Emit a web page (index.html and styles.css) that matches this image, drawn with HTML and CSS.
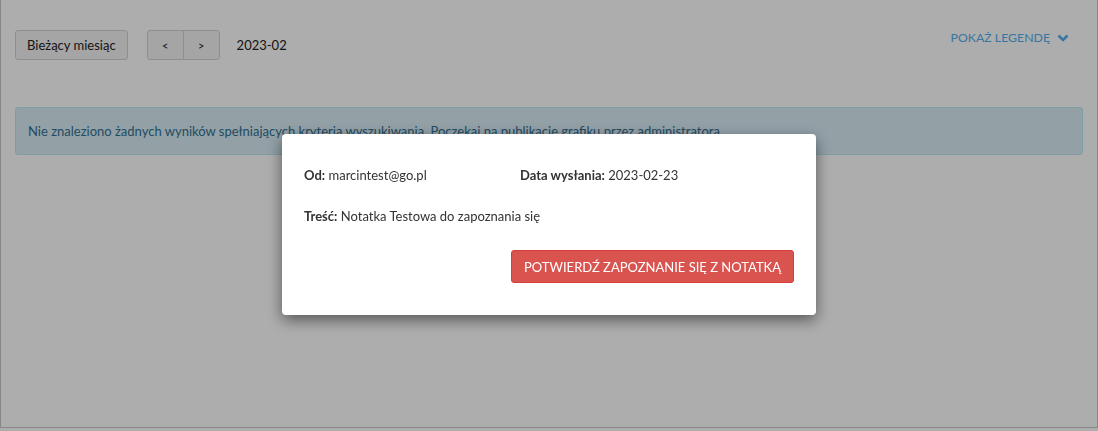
FILE: index.html
```html
<!DOCTYPE html>
<html lang="pl">
<head>
    <meta charset="UTF-8">
    <meta name="viewport" content="width=device-width, initial-scale=1.0">
    <title>Grafik</title>
    <link rel="stylesheet" href="styles.css">
</head>
<body>
    <div class="page">
        <div class="toolbar">
            <button class="btn">Bieżący miesiąc</button>
            <div class="btn-group">
                <button class="btn btn-sm">&lt;</button>
                <button class="btn btn-sm">&gt;</button>
            </div>
            <span class="period">2023-02</span>
            <a class="legend-toggle" href="#">
                Pokaż legendę
                <svg width="12" height="8" viewBox="0 0 12 8"><path d="M1.5 1.5 L6 6 L10.5 1.5" fill="none" stroke="currentColor" stroke-width="2.6"/></svg>
            </a>
        </div>

        <div class="alert">
            Nie znaleziono żadnych wyników spełniających kryteria wyszukiwania. Poczekaj na publikacje grafiku przez administratora.
        </div>
    </div>

    <div class="backdrop"></div>

    <div class="modal">
        <div class="note-row">
            <div><b>Od:</b> marcintest@go.pl</div>
            <div><b>Data wysłania:</b> 2023-02-23</div>
        </div>
        <div class="note-text"><b>Treść:</b> Notatka Testowa do zapoznania się</div>
        <div class="modal-footer">
            <button class="btn-danger">Potwierdź zapoznanie się z notatką</button>
        </div>
    </div>
</body>
</html>
```

FILE: styles.css
```css
body {
    margin: 0;
    font-family: Lato, "Open Sans", sans-serif;
    font-size: 13px;
    color: #333;
    background: #fff;
}
.page {
    height: 427px;
    border: 1px solid #c8c8c8;
    border-top: none;
    box-shadow: 0 2px 3px rgba(0, 0, 0, 0.35);
    padding: 0 14px;
}
.toolbar {
    display: flex;
    align-items: center;
    padding-top: 30px;
    height: 30px;
}
.btn {
    height: 30px;
    padding: 0 11px;
    font-family: inherit;
    font-size: 13px;
    color: #222;
    background: #f3f3f3;
    border: 1px solid #d2d2d2;
    border-radius: 3px;
}
.btn-group {
    display: flex;
    margin-left: 19px;
}
.btn-sm {
    width: 37px;
    padding: 0;
    font-size: 11px;
}
.btn-group .btn-sm:first-child {
    border-radius: 3px 0 0 3px;
}
.btn-group .btn-sm:last-child {
    border-radius: 0 3px 3px 0;
    margin-left: -1px;
}
.period {
    margin-left: 17px;
    color: #222;
}
.legend-toggle {
    margin-left: auto;
    margin-right: 14px;
    margin-top: -15px;
    display: flex;
    align-items: center;
    gap: 7px;
    color: #52b0ee;
    text-decoration: none;
    text-transform: uppercase;
    font-size: 12.3px;
}
.alert {
    margin-top: 47px;
    padding: 15px 12px;
    line-height: 16px;
    background: #d9edf7;
    border: 1px solid #bce8f1;
    border-radius: 3px;
    color: #31708f;
}
.backdrop {
    position: fixed;
    inset: 0;
    background: rgba(0, 0, 0, 0.32);
}
.modal {
    position: fixed;
    left: 282px;
    top: 134px;
    width: 490px;
    padding: 31px 22px 32px;
    background: #fff;
    border-radius: 4px;
    box-shadow: 0 5px 15px rgba(0, 0, 0, 0.5);
    color: #333;
}
.modal b {
    font-weight: 700;
}
.note-row {
    display: grid;
    grid-template-columns: 216px 1fr;
    line-height: 20px;
}
.note-text {
    margin-top: 21px;
    line-height: 20px;
}
.modal-footer {
    display: flex;
    justify-content: flex-end;
    margin-top: 24px;
}
.btn-danger {
    height: 33px;
    padding: 0 12px;
    font-family: inherit;
    font-size: 13px;
    text-transform: uppercase;
    color: #fff;
    background: #d9534f;
    border: 1px solid #d43f3a;
    border-radius: 3px;
}
```
